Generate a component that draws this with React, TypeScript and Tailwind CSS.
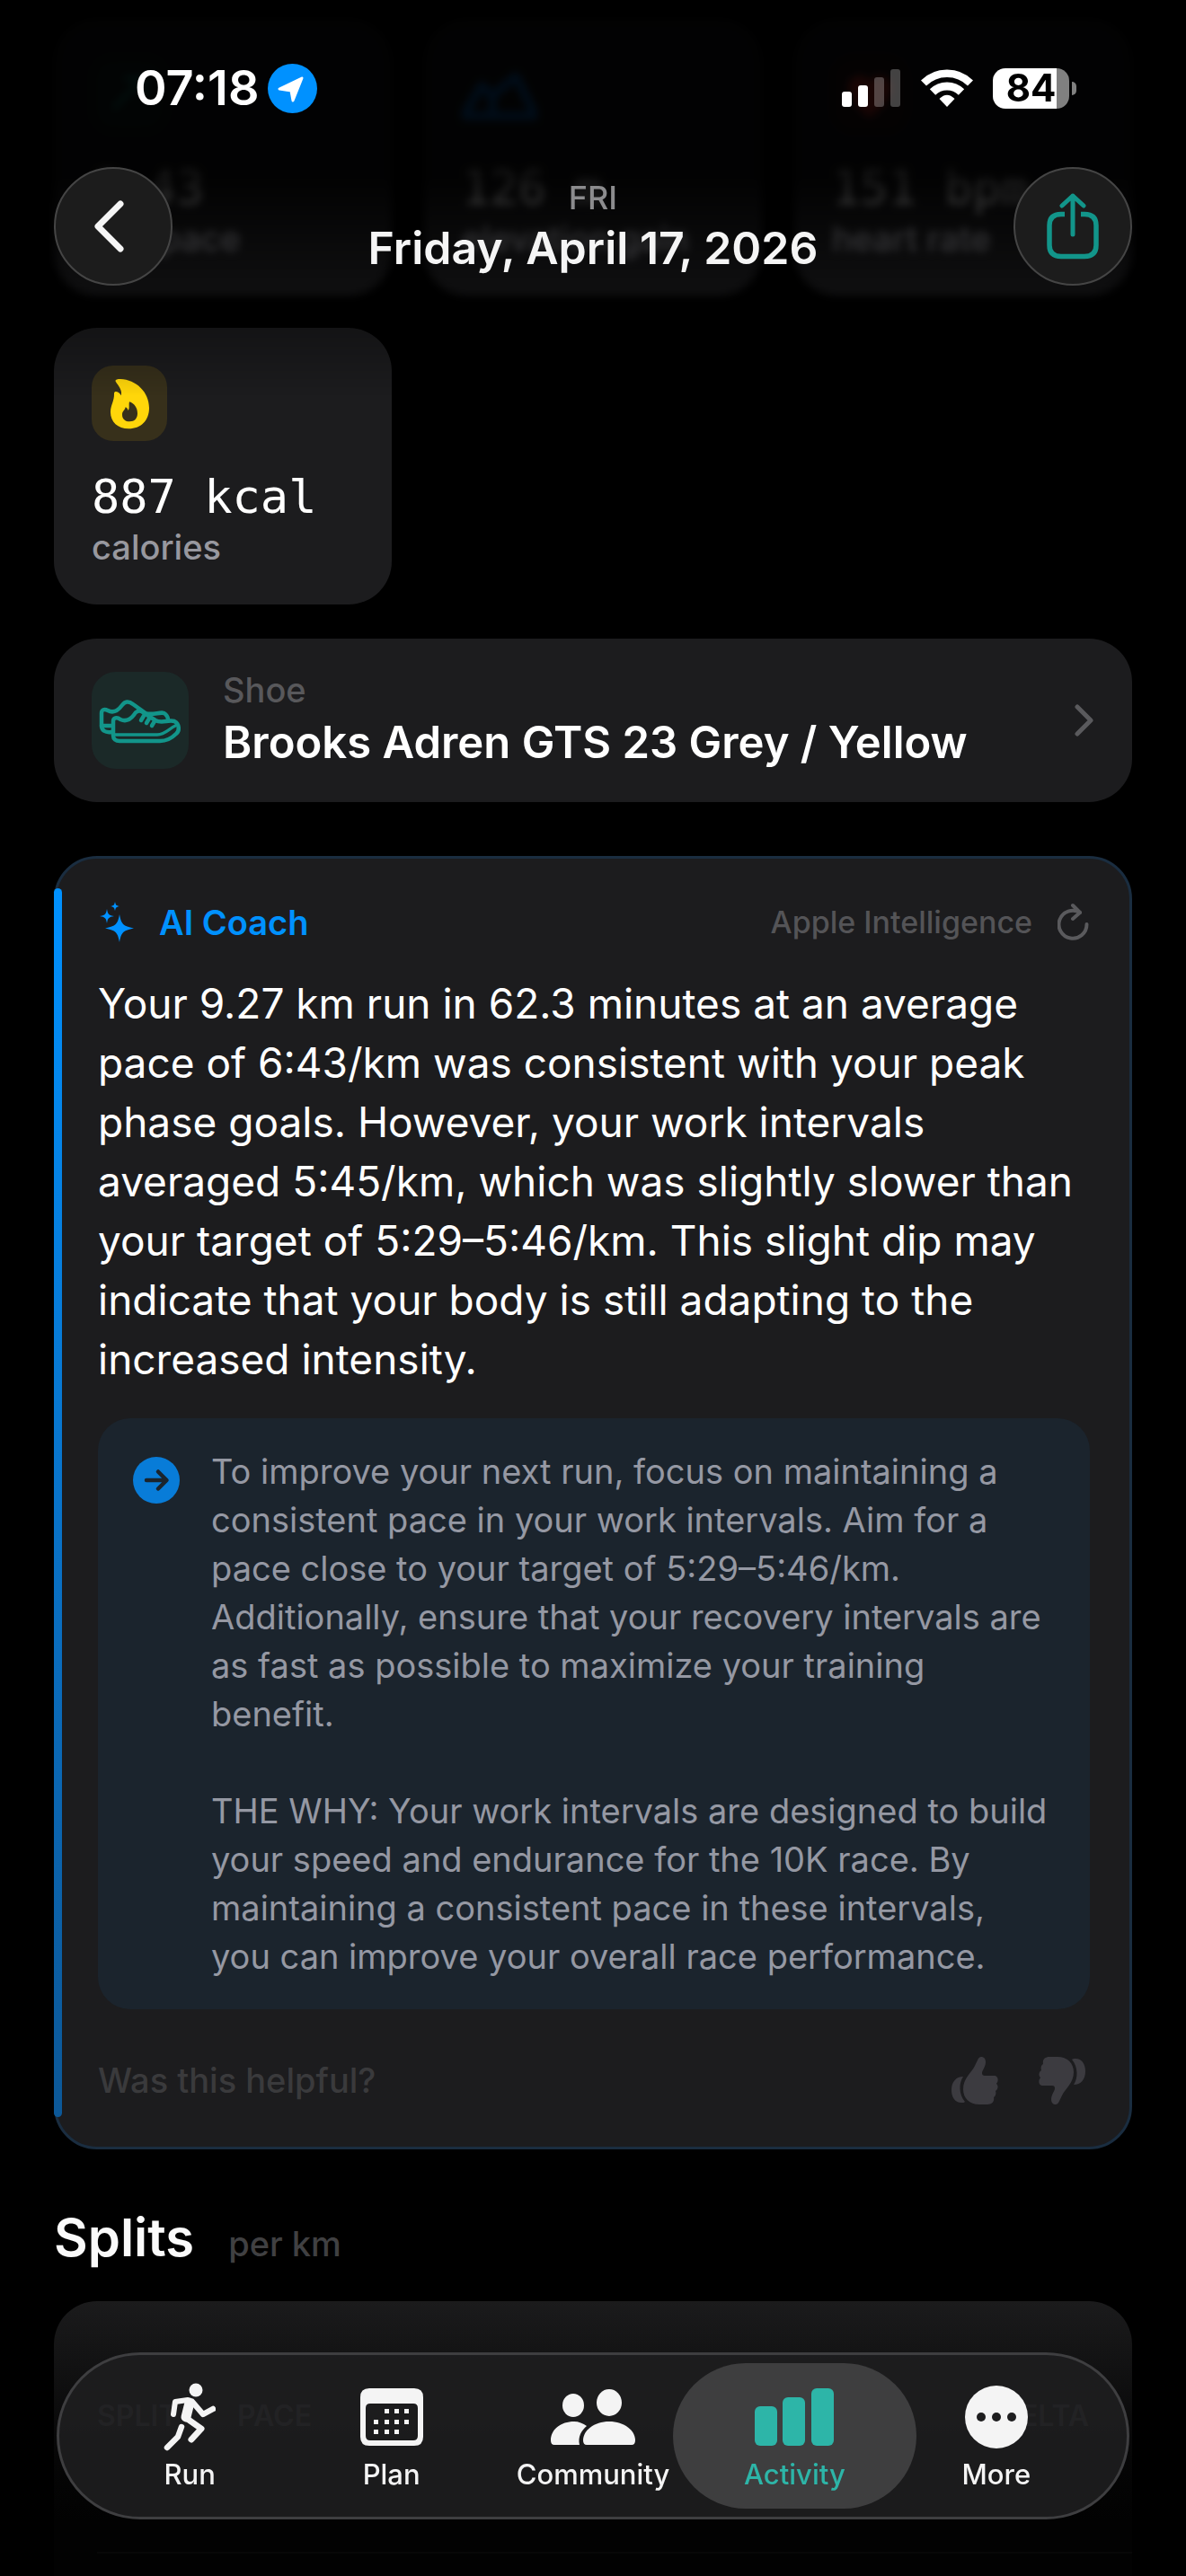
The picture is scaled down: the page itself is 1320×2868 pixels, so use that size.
import type { ReactNode } from "react";

interface Stat {
  value: string;
  label: string;
  icon: ReactNode;
}

interface Tab {
  label: string;
  icon: ReactNode;
  active?: boolean;
}

function StatCard({ stat }: { stat: Stat }) {
  return (
    <div className="rounded-[48px] bg-[#1c1c1e] px-[42px] pt-[42px] pb-[38px]">
      <div className="h-[84px]">{stat.icon}</div>
      <p className="mt-8 font-['DejaVu_Sans_Mono',monospace] text-[52px] leading-[60px] text-white">{stat.value}</p>
      <p className="text-[38px] leading-[52px] font-medium text-[#98989f]">{stat.label}</p>
    </div>
  );
}

function FlameIcon() {
  return (
    <svg viewBox="0 0 252 252" className="size-[84px] rounded-3xl bg-[#37301b]">
      <path
        fill="#ffd60a"
        fillRule="evenodd"
        d="M80 53C78 47 86 44 96 45C148 47 192 88 192 142C192 184 164 211 124 211C87 211 63 188 63 156C63 130 76 120 75 92C76 84 91 86 98 100C104 84 90 68 80 53ZM126 121C123 132 128 142 122 150C120 144 117 140 113 139C111 150 102 152 102 164C102 178 112 187 127 187C143 187 153 177 153 160C153 141 143 127 126 121Z"
      />
    </svg>
  );
}

function ShoeIcon() {
  return (
    <svg viewBox="0 0 108 108" className="size-[108px] shrink-0 rounded-[27px] bg-[#1b2928]" fill="none" stroke="#12958a" strokeWidth="4.5" strokeLinecap="round" strokeLinejoin="round">
      <path d="M22 67C15 68 11 65 11 60V46C11 42 14 41 18 43C25 47 31 41 34 37C37 33 41 32 46 36L60 46C68 49 79 43 82 47C84 49 85 50 85 53" />
      <path d="M11 60H22" />
      <path d="M24 71V55C24 51 28 50 32 53C39 56 44 52 47 48C49 44 53 42 57 45L71 54C78 58 85 53 92 55C98 58 98 66 94 69C88 75 81 77 76 77H31C27 77 24 75 24 71Z" />
      <path d="M24 70H73C82 70 86 63 95 59" strokeWidth="3.5" />
      <path d="M58 49L55 54M64 52L61 57M70 55L67 60" />
    </svg>
  );
}

const scrolledStats: Stat[] = [
  {
    value: "6:43",
    label: "avg pace",
    icon: (
      <svg viewBox="0 0 84 84" className="size-[84px] rounded-3xl bg-[#1b2928]" fill="none" stroke="#12958a" strokeWidth="6">
        <path d="M24 58L58 24M36 24H58V46" />
      </svg>
    ),
  },
  {
    value: "126 m",
    label: "elevation gain",
    icon: (
      <svg viewBox="0 0 84 84" className="size-[84px]" fill="none" stroke="#0a84ff" strokeWidth="9" strokeLinejoin="round">
        <path d="M2 66L22 32L34 44L60 22L82 66ZM34 44V66" />
      </svg>
    ),
  },
  {
    value: "151 bpm",
    label: "heart rate",
    icon: (
      <svg viewBox="0 0 84 84" className="size-[84px] rounded-3xl bg-[#2a1a1c]" fill="#ff3b30">
        <path d="M42 68C24 54 18 44 18 34C18 20 36 16 42 28C48 16 66 20 66 34C66 44 60 54 42 68Z" />
      </svg>
    ),
  },
];

const tabs: Tab[] = [
  {
    label: "Run",
    icon: (
      <svg viewBox="0 0 58 76" className="h-[76px] w-[58px]" fill="none" stroke="currentColor" strokeLinecap="round" strokeLinejoin="round">
        <circle cx="36" cy="8" r="7.5" fill="currentColor" stroke="none" />
        <path d="M11 35L13 21L27 19" strokeWidth="6" />
        <path d="M29 22L25 38" strokeWidth="11" />
        <path d="M32 21L44 35L55 29" strokeWidth="6.5" />
        <path d="M25 39L42 51L31 63" strokeWidth="7" />
        <path d="M20 49L16 60L4 72" strokeWidth="6.5" />
      </svg>
    ),
  },
  {
    label: "Plan",
    icon: (
      <svg viewBox="0 0 70 64" className="h-[64px] w-[70px]" fill="currentColor">
        <path fillRule="evenodd" d="M10 0H60Q70 0 70 10V54Q70 64 60 64H10Q0 64 0 54V10Q0 0 10 0ZM11 17Q6 17 6 22V53Q6 58 11 58H59Q64 58 64 53V22Q64 17 59 17Z" />
        <path d="M27 23h5v5h-5zM38 23h5v5h-5zM49 23h5v5h-5zM15 35h5v5h-5zM27 35h5v5h-5zM38 35h5v5h-5zM49 35h5v5h-5zM15 46h5v5h-5zM27 46h5v5h-5zM38 46h5v5h-5z" />
      </svg>
    ),
  },
  {
    label: "Community",
    icon: (
      <svg viewBox="0 0 94 62" className="h-[62px] w-[94px]" fill="currentColor">
        <ellipse cx="25" cy="18" rx="12" ry="13" />
        <ellipse cx="65" cy="15" rx="14" ry="15" />
        <path d="M0 57C0 45 11 36 26 36C31 36 36 38 40 41C34 46 30 53 32 62H4Q0 62 0 57Z" />
        <path d="M40 62Q36 62 36 57C36 46 48 36 65 36S94 46 94 57Q94 62 90 62Z" />
      </svg>
    ),
  },
  {
    label: "Activity",
    active: true,
    icon: (
      <svg viewBox="0 0 88 64" className="h-[64px] w-[88px]" fill="currentColor">
        <rect x="0" y="20" width="25" height="44" rx="6" />
        <rect x="31" y="10" width="25" height="54" rx="6" />
        <rect x="63" y="0" width="25" height="64" rx="6" />
      </svg>
    ),
  },
  {
    label: "More",
    icon: (
      <svg viewBox="0 0 70 70" className="size-[70px]" fill="currentColor">
        <circle cx="35" cy="35" r="35" />
        <g fill="#1e1e1f">
          <circle cx="18" cy="35" r="5" />
          <circle cx="35" cy="35" r="5" />
          <circle cx="52" cy="35" r="5" />
        </g>
      </svg>
    ),
  },
];

function ThumbIcon({ className }: { className?: string }) {
  return (
    <svg viewBox="0 0 52 53" className={className} fill="currentColor">
      <path d="M33 0C36 0 38 2 38 6C38 11 34 15 34 18C34 20 35 21 37 21H47C51 21 52 24 51.5 27C51 29 50 29 50 30C53 33 51 37 49 38C50 41 49 44 47 45C48 50 45 53 40 53H31C20 53 13 46 13 36C13 24 22 18 26 10C29 4 30 0 33 0Z" />
      <path d="M13 22C8 29 8 42 15 50C14 51 13 51 11 51C4 51 0 45 0 37C0 28 5 22 13 22Z" />
    </svg>
  );
}

function StatusBar() {
  return (
    <div className="mt-[66px] flex h-[64px] items-center justify-between pr-[62px] pl-[90px]">
      <div className="flex items-center gap-[10px]">
        <span className="text-[54px] leading-[64px] font-semibold text-white">07:18</span>
        <svg viewBox="0 0 55 55" className="size-[55px]">
          <circle cx="27.5" cy="27.5" r="27.5" fill="#0091ff" />
          <path d="M38 16L13 28L26 30L28 41Z" fill="white" stroke="white" strokeWidth="3" strokeLinejoin="round" />
        </svg>
      </div>
      <div className="flex items-center gap-[22px]">
        <svg viewBox="0 0 66 42" className="h-[42px] w-[66px]" fill="white">
          <rect x="0" y="25" width="11" height="17" rx="3" />
          <rect x="18" y="18" width="11" height="24" rx="3" />
          <rect x="36" y="9" width="11" height="33" rx="3" opacity="0.25" />
          <rect x="54" y="0" width="11" height="42" rx="3" opacity="0.25" />
        </svg>
        <svg viewBox="0 0 58 42" className="h-[42px] w-[58px]" fill="none" stroke="white">
          <path d="M3 15.5A36.8 36.8 0 0 1 55 15.5" strokeWidth="8.5" />
          <path d="M13 25.5A22.7 22.7 0 0 1 45 25.5" strokeWidth="9" />
          <path d="M29 42L20.5 33Q29 24.5 37.5 33Z" fill="white" stroke="none" />
        </svg>
        <div className="flex items-center gap-[3px]">
          <div className="flex h-[45px] w-[85px] items-center justify-center rounded-[14px] bg-linear-to-r from-white from-84% to-[#808080] to-84%">
            <span className="text-[42px] leading-none font-bold text-black">84</span>
          </div>
          <div className="h-[15px] w-[5px] rounded-r-full bg-[#808080]" />
        </div>
      </div>
    </div>
  );
}

function Header() {
  return (
    <header className="fixed inset-x-0 top-0 z-20 flow-root bg-linear-to-b from-black/90 from-45% via-black/45 via-74% to-transparent px-[60px] pb-[122px]">
      <StatusBar />
      <div className="mt-[56px] flex items-center justify-between">
        <button type="button" aria-label="Back" className="flex size-[132px] items-center justify-center rounded-full border-2 border-[#454545] bg-[#1c1c1c]">
          <svg viewBox="0 0 34 58" className="mr-[10px] h-[58px] w-[34px]" fill="none" stroke="#f5f5f5" strokeWidth="7" strokeLinecap="round" strokeLinejoin="round">
            <path d="M30 4L5 29L30 54" />
          </svg>
        </button>
        <div className="pb-1 text-center">
          <p className="text-[36px] leading-[52px] font-medium text-[#8c8c8e]">FRI</p>
          <h1 className="text-[50px] leading-[60px] font-semibold text-[#f5f5f5]">Friday, April 17, 2026</h1>
        </div>
        <button type="button" aria-label="Share" className="flex size-[132px] items-center justify-center rounded-full border-2 border-[#454545] bg-[#1c1c1c]">
          <svg viewBox="0 0 58 74" className="h-[74px] w-[58px]" fill="none" stroke="#12958a" strokeWidth="5.5" strokeLinecap="round" strokeLinejoin="round">
            <path d="M20 23.5H16Q3 23.5 3 36V58Q3 70.5 16 70.5H42Q55 70.5 55 58V36Q55 23.5 42 23.5H38" strokeLinecap="butt" />
            <path d="M29 46V3M17 14L29 3L41 14" strokeWidth="5" />
          </svg>
        </button>
      </div>
    </header>
  );
}

function CoachCard() {
  return (
    <section className="relative mt-[60px] rounded-[48px] border-[3px] border-[#1a2d40] bg-[#1c1c1e] pt-[44px] pr-[44px] pb-[46px] pl-[46px]">
      <div className="absolute -left-[3px] top-[33px] bottom-[33px] w-[9px] rounded-full bg-linear-to-b from-[#0091ff] to-[#0c5898]" />
      <div className="flex h-[54px] items-center">
        <svg viewBox="0 0 40 46" className="ml-[2px] h-[46px] w-[40px]" fill="#0091ff">
          <path d="M22 14C24 25 26 27 38 29.5C26 32 24 34 22 45C20 34 18 32 6 29.5C18 27 20 25 22 14Z" />
          <path d="M8 8C9 14 10 15 16 16C10 17 9 18 8 24C7 18 6 17 0 16C6 15 7 14 8 8Z" />
          <path d="M17 0C18 4 18 4 22 5C18 6 18 6 17 10C16 6 16 6 12 5C16 4 16 4 17 0Z" />
        </svg>
        <h2 className="ml-[26px] text-[38px] leading-[54px] font-semibold text-[#0091ff]">AI Coach</h2>
        <span className="ml-auto text-[34px] leading-[54px] font-medium text-[#545457]">Apple Intelligence</span>
        <button type="button" aria-label="Regenerate" className="ml-[28px]">
          <svg viewBox="0 0 36 44" className="h-[44px] w-[36px]" fill="none" stroke="#5a5a5d" strokeWidth="4" strokeLinecap="round" strokeLinejoin="round">
            <path d="M32.5 24A15.5 15.5 0 1 1 25 11" />
            <path d="M17 3L25 11L17 18" />
          </svg>
        </button>
      </div>
      <p className="mt-[30px] text-[46px] leading-[66px] text-white">
        Your 9.27 km run in 62.3 minutes at an average pace of 6:43/km was consistent with your peak phase goals. However, your work intervals averaged 5:45/km, which was slightly slower than your target of 5:29–5:46/km. This slight dip may indicate that your body is still adapting to the increased intensity.
      </p>
      <div className="mt-[33px] flex gap-[35px] rounded-[36px] bg-[#1b242d] py-8 pr-[44px] pl-[39px]">
        <svg viewBox="0 0 52 52" className="mt-[11px] size-[52px] shrink-0">
          <circle cx="26" cy="26" r="26" fill="#087cd8" />
          <path d="M15 26H37M28 16.5L37.5 26L28 35.5" fill="none" stroke="#1b242d" strokeWidth="4.5" strokeLinecap="round" strokeLinejoin="round" />
        </svg>
        <div className="text-[38px] leading-[54px] text-[#9598a3]">
          <p>
            To improve your next run, focus on maintaining a consistent pace in your work intervals. Aim for a pace close to your target of 5:29–5:46/km. Additionally, ensure that your recovery intervals are as fast as possible to maximize your training benefit.
          </p>
          <p className="mt-[54px]">
            THE WHY: Your work intervals are designed to build your speed and endurance for the 10K race. By maintaining a consistent pace in these intervals, you can improve your overall race performance.
          </p>
        </div>
      </div>
      <div className="mt-[51px] flex h-[56px] items-center text-[#3c3b40]">
        <span className="text-[38px] leading-[56px] font-medium text-[#3a3a3c]">Was this helpful?</span>
        <button type="button" aria-label="Helpful" className="ml-auto">
          <ThumbIcon className="h-[53px] w-[52px]" />
        </button>
        <button type="button" aria-label="Not helpful" className="mr-[5px] ml-[45px]">
          <ThumbIcon className="h-[53px] w-[52px] rotate-180" />
        </button>
      </div>
    </section>
  );
}

function TabBar() {
  return (
    <nav className="fixed inset-x-0 bottom-0 z-20 px-[63px] pb-[63px]">
      <div className="flex h-[186px] rounded-full border-[3px] border-[#3e3e40] bg-[#1e1e1f]/90 px-[33px]">
        {tabs.map((tab) => (
          <a
            key={tab.label}
            href={`#${tab.label.toLowerCase()}`}
            className={`relative flex flex-1 flex-col items-center pt-[29px] ${tab.active ? "text-[#2db5a8]" : "text-[#f4f4f4]"}`}
          >
            {tab.active && <span className="absolute -inset-x-[23px] inset-y-[9px] rounded-full bg-[#3e3e3f]" />}
            <span className="relative flex h-[80px] items-center">{tab.icon}</span>
            <span className="relative mt-1 text-[31px] leading-[40px] font-medium">{tab.label}</span>
          </a>
        ))}
      </div>
    </nav>
  );
}

export default function App() {
  return (
    <div className="flex h-screen flex-col overflow-hidden bg-black px-[60px] pt-[21px] font-[Inter,sans-serif]">
      <Header />
      <div className="grid grid-cols-3 gap-[36px] blur-[5px]">
        {scrolledStats.map((stat) => (
          <StatCard key={stat.label} stat={stat} />
        ))}
      </div>
      <div className="mt-[36px] grid grid-cols-3 gap-[36px]">
        <StatCard stat={{ value: "887 kcal", label: "calories", icon: <FlameIcon /> }} />
      </div>

      {/* Shoe */}
      <a href="#shoe" className="mt-[38px] flex h-[182px] shrink-0 items-center rounded-[48px] bg-[#1c1c1e] px-[42px]">
        <ShoeIcon />
        <span className="ml-[38px] flex flex-col pb-1">
          <span className="text-[38px] leading-[54px] font-medium text-[#58585b]">Shoe</span>
          <span className="text-[49px] leading-[64px] font-semibold text-white">Brooks Adren GTS 23 Grey / Yellow</span>
        </span>
        <svg viewBox="0 0 22 36" className="ml-auto h-[36px] w-[22px]" fill="none" stroke="#5a5a5d" strokeWidth="5" strokeLinecap="round" strokeLinejoin="round">
          <path d="M3 3L18 18L3 33" />
        </svg>
      </a>

      <CoachCard />

      {/* Splits */}
      <div className="mt-[56px] flex items-baseline gap-[38px]">
        <h2 className="text-[58px] leading-[84px] font-semibold text-[#fafafa]">Splits</h2>
        <span className="text-[38px] font-medium text-[#404042]">per km</span>
      </div>
      <div className="mt-[29px] flex-1 rounded-t-[48px] bg-linear-to-b from-[#1b1b1c] to-[#020202] to-80% pt-[106px] pl-[48px]">
        <table className="w-full text-left text-[32px] leading-[44px] text-[#4a4a50]">
          <thead>
            <tr className="border-b-2 border-[#070707]">
              <th className="w-[156px] pb-[129px] font-semibold">SPLIT</th>
              <th className="pb-[129px] font-semibold">PACE</th>
              <th className="pr-[48px] pb-[129px] text-right font-semibold">DELTA</th>
            </tr>
          </thead>
        </table>
      </div>
      <TabBar />
    </div>
  );
}
